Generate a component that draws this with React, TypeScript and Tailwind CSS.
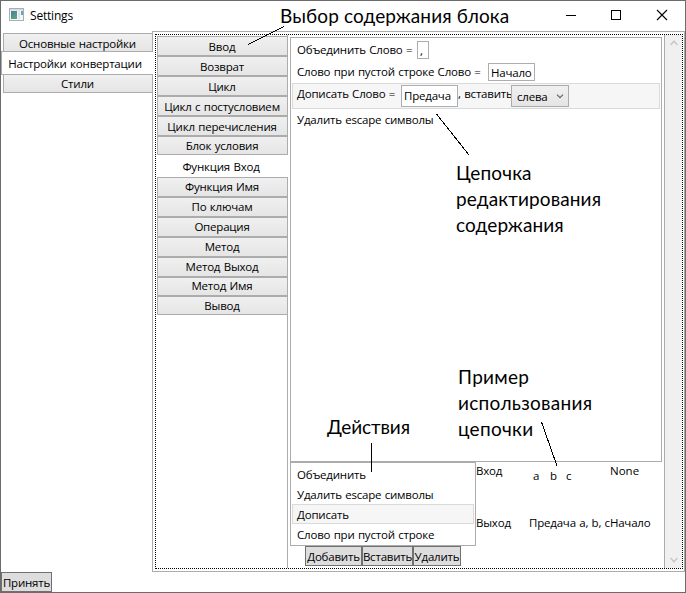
import React from "react";

const leftBtn = "flex items-center justify-center border border-[#acacac] bg-linear-to-b from-[#f0f0f0] to-[#e5e5e5]";

const blocksBefore = [
  { t: "Ввод", h: "h-5 pt-px" },
  { t: "Возврат", h: "h-5 pt-px" },
  { t: "Цикл", h: "h-5 pt-px" },
  { t: "Цикл с постусловием", h: "h-5 pt-px" },
  { t: "Цикл перечисления", h: "h-5 pt-px" },
  { t: "Блок условия", h: "h-[19px] pt-px" },
];
const blocksAfter = [
  { t: "Функция Имя", h: "h-5 pb-px" },
  { t: "По ключам", h: "h-5 pb-px" },
  { t: "Операция", h: "h-5 pb-px" },
  { t: "Метод", h: "h-5 pb-px" },
  { t: "Метод Выход", h: "h-5 pb-px" },
  { t: "Метод Имя", h: "h-[19px] pb-px" },
  { t: "Вывод", h: "h-[19px]" },
];

function BlockTab({ t, h }: { t: string; h: string }) {
  return (
    <div className={`${leftBtn} ${h} pr-px`}>
      <span>{t}</span>
    </div>
  );
}

function ActionButton({ t, w }: { t: string; w: string }) {
  return (
    <div className={`flex h-5 shrink-0 items-center justify-center border border-[#707070] bg-[#dddddd] pt-px ${w}`}>
      <span>{t}</span>
    </div>
  );
}

function Chevron({ up }: { up?: boolean }) {
  return (
    <svg width="8" height="6" viewBox="0 0 8 6" fill="none" stroke="#c8c8c8" strokeWidth="1.5">
      <path d={up ? "M0.5 5L4 1.2L7.5 5" : "M0.5 1L4 4.8L7.5 1"} />
    </svg>
  );
}

function TitleBar() {
  return (
    <div className="flex h-[30px] shrink-0 items-center pl-2">
      <svg width="15" height="13" viewBox="0 0 15 13" className="mb-[3px] shrink-0">
        <defs>
          <linearGradient id="pane" x1="0" y1="0" x2="0.6" y2="1">
            <stop offset="0" stopColor="#4b79a8" />
            <stop offset="1" stopColor="#56a878" />
          </linearGradient>
        </defs>
        <rect x="0.5" y="0.5" width="14" height="12" fill="#f4f6f8" stroke="#a9afb6" />
        <rect x="1" y="1" width="13" height="1.5" fill="#d4dae0" />
        <rect x="2" y="3" width="6" height="8" fill="url(#pane)" />
        <rect x="9" y="3" width="2" height="8" fill="#dfe5ea" />
        <rect x="12" y="3" width="2" height="4" fill="#6e9fc0" />
      </svg>
      <span className="ml-[6px] text-[12px]">Settings</span>
      <svg width="102" height="12" viewBox="0 0 102 12" className="mr-[17px] mb-[2px] ml-auto" fill="none" stroke="#000" shapeRendering="crispEdges">
        <path d="M0 6.5H10" />
        <rect x="45.5" y="1.5" width="9" height="9" />
        <path d="M91 1L101 11M101 1L91 11" shapeRendering="auto" strokeWidth="1.1" />
      </svg>
    </div>
  );
}

function MainTabs() {
  return (
    <div className="w-[152px] shrink-0 pt-[2px]">
      <div className={`${leftBtn} ml-[2px] h-[18px] border-r-0 border-b-0 pt-[2px] pr-[2px]`}>
        <span>Основные настройки</span>
      </div>
      <div className="relative z-10 flex h-6 w-[152px] items-center justify-center border border-r-0 border-[#acacac] bg-white pt-px pr-[5px]">
        <span>Настройки конвертации</span>
      </div>
      <div className={`${leftBtn} ml-[2px] h-[18px] border-t-0 border-r-0 pr-[2px]`}>
        <span>Стили</span>
      </div>
    </div>
  );
}

function BlockTabs() {
  return (
    <div className="w-[132px] shrink-0 border-r border-[#acacac] pt-px">
      <div className="-mr-px ml-px">
        {blocksBefore.map((b) => (
          <BlockTab key={b.t} {...b} />
        ))}
        <div className="flex h-[22px] items-center justify-center bg-white pt-[2px] pr-[3px]">
          <span>Функция Вход</span>
        </div>
        {blocksAfter.map((b) => (
          <BlockTab key={b.t} {...b} />
        ))}
      </div>
    </div>
  );
}

function Chain() {
  return (
    <div className="h-[425px] w-[372px] border border-[#acacac] px-px pt-[2px]">
      <div className="flex h-[22px] pl-[5px]">
        <span className="w-[116px] leading-5">Объединить Слово =</span>
        <div className="mt-px ml-[4px] h-[18px] w-3 border border-[#abadb3] pl-[2px] leading-[18px]">,</div>
      </div>
      <div className="flex h-[21px] pl-[5px]">
        <span className="w-[187px] leading-5">Слово при пустой строке Слово =</span>
        <div className="mt-px ml-[4px] h-[18px] w-[47px] border border-[#abadb3] pl-[2px] leading-[18px]">Начало</div>
      </div>
      <div className="flex h-[26px] border border-[#dadada] bg-[#f6f6f6] pt-px pl-[4px]">
        <span className="w-[101px] leading-[18px]">Дописать Слово =</span>
        <div className="ml-[3px] h-[22px] w-[57px] border border-[#abadb3] bg-white pl-[2px] leading-[19px]">Предача</div>
        <span className="w-[53px] leading-[18px]">, вставить</span>
        <div className="flex h-[22px] w-[58px] justify-between border border-[#acacac] bg-linear-to-b from-[#f0f0f0] to-[#e5e5e5] pr-1 pl-[5px]">
          <span className="leading-[22px]">слева</span>
          <svg width="8" height="5" viewBox="0 0 8 5" className="mt-[8px]" fill="none" stroke="#606060" strokeWidth="1.1">
            <path d="M1 0.7L4 3.7L7 0.7" />
          </svg>
        </div>
      </div>
      <div className="pl-[5px] leading-[21px]">Удалить escape символы</div>
    </div>
  );
}

function Lower() {
  return (
    <div className="flex">
      <div className="w-[186px] shrink-0">
        <div className="h-[84px] border border-[#acacac] px-px pt-[2px]">
          <div className="h-5 pl-[5px] leading-5">Объединить</div>
          <div className="h-5 pl-[5px] leading-5">Удалить escape символы</div>
          <div className="-mt-px mb-px h-5 border border-[#dadada] bg-[#f6f6f6] pl-[4px] leading-5">Дописать</div>
          <div className="h-5 pl-[5px] leading-5">Слово при пустой строке</div>
        </div>
        <div className="flex pl-[15px]">
          <ActionButton t="Добавить" w="w-[57px]" />
          <ActionButton t="Вставить" w="w-[51px]" />
          <ActionButton t="Удалить" w="w-[48px]" />
        </div>
      </div>
      <div className="w-[186px] pt-px">
        <div className="flex h-[52px] leading-4">
          <span className="w-[57px]">Вход</span>
          <span className="w-[17px] pt-[5px]">a</span>
          <span className="w-[16px] pt-[5px]">b</span>
          <span className="w-[44px] pt-[5px]">c</span>
          <span className="tracking-normal">None</span>
        </div>
        <div className="flex leading-4">
          <span className="w-[53px]">Выход</span>
          <span>Предача a, b, cНачало</span>
        </div>
      </div>
    </div>
  );
}

function Notes() {
  const note = "absolute text-[19px] leading-[26px]";
  return (
    <div className="pointer-events-none absolute -inset-px z-20 font-['Lato','Open_Sans',sans-serif] tracking-[0.12px] whitespace-nowrap [word-spacing:0px]">
      <div className={`${note} top-[3px] left-[280px]`}>Выбор содержания блока</div>
      <div className={`${note} top-[160px] left-[456px]`}>Цепочка<br />редактирования<br />содержания</div>
      <div className={`${note} top-[364px] left-[458px] tracking-[0.3px]`}>Пример<br />использования<br />цепочки</div>
      <div className={`${note} top-[414px] left-[327px] tracking-[-0.1px]`}>Действия</div>
      <svg className="absolute inset-0" width="686" height="593" stroke="#000" fill="none" shapeRendering="crispEdges">
        <path d="M284 26.5L248 44.5M436.5 114L469 155M541.5 422L557 466M371.5 443V472" />
      </svg>
    </div>
  );
}

export default function App() {
  return (
    <div className="relative flex h-[593px] w-[686px] flex-col overflow-hidden border border-[#6b6b6b] bg-white font-['Open_Sans',sans-serif] text-[11.5px] leading-4 tracking-[-0.2px] whitespace-nowrap text-black [word-spacing:0.6px]">
      <TitleBar />
      <div className="flex h-[541px] shrink-0">
        <MainTabs />
        <div className="-ml-px w-[533px] border border-[#acacac] p-[2px]">
          <div className="flex h-[535px] w-[528px] border border-dotted border-black">
            <BlockTabs />
            <div className="w-[376px] shrink-0 pt-[2px] pl-[2px]">
              <Chain />
              <Lower />
            </div>
            <div className="flex grow flex-col items-center justify-between border-l border-[#acacac] bg-[#f0f0f0] py-[5px]">
              <Chevron up />
              <Chevron />
            </div>
          </div>
        </div>
      </div>
      <div className="flex">
        <ActionButton t="Принять" w="w-[51px]" />
      </div>
      <Notes />
    </div>
  );
}
